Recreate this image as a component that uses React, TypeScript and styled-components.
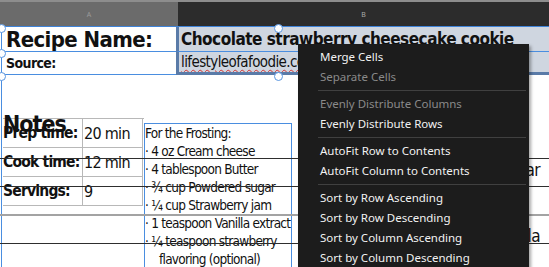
import { Fragment } from 'react';
import styled, { createGlobalStyle } from 'styled-components';

const GlobalStyle = createGlobalStyle`
  html, body {
    margin: 0;
    padding: 0;
    background: #ffffff;
    overflow: hidden;
  }
`;

const DOC_FONT = `"DejaVu Sans Condensed", "DejaVu Sans", sans-serif`;
const UI_FONT = `"Noto Sans", "Open Sans", sans-serif`;

const Page = styled.div`
  position: relative;
  width: 549px;
  height: 267px;
  overflow: hidden;
  background: #ffffff;
  font-family: ${DOC_FONT};
  font-stretch: condensed;
  color: #111;
`;

const ColumnBar = styled.div`
  display: grid;
  grid-template-columns: 178px 1fr;
  height: 27px;
  border-top: 2px solid #8d8d8d;
  box-sizing: border-box;
  border-bottom: 1px solid #3f83d8;
`;

const ColumnHead = styled.div<{ $active?: boolean }>`
  display: flex;
  align-items: center;
  justify-content: center;
  background: ${(p) => (p.$active ? '#2c2c2c' : '#6b6b6b')};
  color: ${(p) => (p.$active ? '#a9a9a9' : '#9a9a9a')};
  font-family: ${UI_FONT};
  font-size: 7px;
`;

const Sheet = styled.div`
  border-left: 1.5px solid #4a8ee0;
  margin-left: 1px;
  height: 240px;
`;

const RecipeGrid = styled.div`
  display: grid;
  grid-template-columns: 174px 1fr;
  grid-template-rows: 25px 23px;
`;

const LabelCell = styled.div<{ $big?: boolean }>`
  display: flex;
  align-items: center;
  padding-left: 4px;
  font-weight: 700;
  font-size: ${(p) => (p.$big ? '22px' : '14px')};
  letter-spacing: ${(p) => (p.$big ? '-0.6px' : '-0.6px')};
  border-bottom: 1px solid #4a8ee0;
  white-space: nowrap;
`;

const ValueCell = styled.div<{ $big?: boolean; $last?: boolean }>`
  display: flex;
  align-items: center;
  padding-left: 2px;
  background: #cfd6e0;
  border-left: 3px solid #5a7ba8;
  border-bottom: ${(p) => (p.$last ? '3px solid #5a7ba8' : '1px solid #4a8ee0')};
  font-weight: ${(p) => (p.$big ? 700 : 400)};
  font-size: ${(p) => (p.$big ? '17px' : '15px')};
  letter-spacing: ${(p) => (p.$big ? '-0.5px' : '-0.6px')};
  white-space: nowrap;
  overflow: hidden;
`;

const Squiggle = styled.span`
  text-decoration: underline wavy #d23030;
  text-decoration-thickness: 1px;
  text-underline-offset: 2px;
`;

const NotesArea = styled.div`
  display: flex;
  margin-top: 36px;
  padding-left: 1px;
`;

const NotesColumn = styled.div`
  width: 141px;
  display: flex;
  flex-direction: column;
`;

const NotesTitle = styled.div`
  font-size: 23px;
  font-weight: 700;
  line-height: 27px;
  height: 7px;
  letter-spacing: -1px;
  position: relative;
  z-index: 1;
`;

const TimesTable = styled.div`
  display: grid;
  grid-template-columns: 80px 60px;
  grid-auto-rows: 29px;
  border-top: 1px solid #b8b8b8;
`;

const TimeLabel = styled.div`
  display: flex;
  align-items: center;
  font-weight: 700;
  font-size: 15.5px;
  letter-spacing: -0.8px;
  white-space: nowrap;
  border-bottom: 1px solid #b8b8b8;
  border-right: 1px solid #b8b8b8;
`;

const TimeValue = styled.div`
  display: flex;
  align-items: center;
  padding-left: 1px;
  font-size: 16px;
  letter-spacing: -0.7px;
  border-bottom: 1px solid #b8b8b8;
  border-right: 1px solid #b8b8b8;
`;

const Ingredients = styled.div`
  margin-top: 12px;
  width: 146px;
  height: 200px;
  border: 1.5px solid #4a8ee0;
  border-bottom: none;
  font-size: 13.5px;
  letter-spacing: -0.75px;
  line-height: 18px;
  padding-top: 0;
`;

const Ingredient = styled.div<{ $indent?: boolean }>`
  padding-left: ${(p) => (p.$indent ? '14px' : '0')};
  white-space: nowrap;
`;

const Rule = styled.div<{ $top: number; $soft?: boolean }>`
  position: absolute;
  left: 0;
  right: 0;
  top: ${(p) => p.$top}px;
  height: ${(p) => (p.$soft ? '2px' : '1px')};
  background: ${(p) => (p.$soft ? '#a3a3a3' : '#2e2e2e')};
  z-index: 2;
`;

const GhostText = styled.div<{ $top: number }>`
  position: absolute;
  right: 9px;
  top: ${(p) => p.$top}px;
  font-size: 17px;
  letter-spacing: -0.6px;
`;

const Handle = styled.div<{ $x: number; $y: number }>`
  position: absolute;
  left: ${(p) => p.$x - 4}px;
  top: ${(p) => p.$y - 4}px;
  width: 7px;
  height: 7px;
  border-radius: 50%;
  background: #fff;
  border: 1px solid #5a96e0;
  z-index: 3;
`;

const Menu = styled.div`
  position: absolute;
  left: 298px;
  top: 44px;
  width: 231px;
  height: 240px;
  padding-top: 3px;
  box-sizing: border-box;
  background: #1c1c1c;
  box-shadow: 2px 2px 3px rgba(0, 0, 0, 0.35);
  font-family: ${UI_FONT};
  font-stretch: normal;
  z-index: 5;
`;

const MenuItem = styled.div<{ $disabled?: boolean }>`
  height: 20px;
  line-height: 20px;
  padding-left: 22px;
  font-size: 11.5px;
  color: ${(p) => (p.$disabled ? '#8a8a8a' : '#f2f2f2')};
  white-space: nowrap;
`;

const MenuSeparator = styled.div`
  height: 1px;
  margin: 3px 3px 3px 20px;
  background: #404040;
`;

const menuGroups: { label: string; disabled?: boolean }[][] = [
  [{ label: 'Merge Cells' }, { label: 'Separate Cells', disabled: true }],
  [{ label: 'Evenly Distribute Columns', disabled: true }, { label: 'Evenly Distribute Rows' }],
  [{ label: 'AutoFit Row to Contents' }, { label: 'AutoFit Column to Contents' }],
  [
    { label: 'Sort by Row Ascending' },
    { label: 'Sort by Row Descending' },
    { label: 'Sort by Column Ascending' },
    { label: 'Sort by Column Descending' },
  ],
];

const times = [
  ['Prep time:', '20 min'],
  ['Cook time:', '12 min'],
  ['Servings:', '9'],
];

const ingredients = [
  'For the Frosting:',
  '· 4 oz Cream cheese',
  '· 4 tablespoon Butter',
  '· ¾ cup Powdered sugar',
  '· ¼ cup Strawberry jam',
  '· 1 teaspoon Vanilla extract',
  '· ¼ teaspoon strawberry',
];

export default function App() {
  return (
    <Page>
      <GlobalStyle />
      <ColumnBar>
        <ColumnHead>A</ColumnHead>
        <ColumnHead $active>B</ColumnHead>
      </ColumnBar>
      <Sheet>
        <RecipeGrid>
          <LabelCell $big>Recipe Name:</LabelCell>
          <ValueCell $big>Chocolate strawberry cheesecake cookie</ValueCell>
          <LabelCell>Source:</LabelCell>
          <ValueCell $last>
            <Squiggle>lifestyleofafoodie.com</Squiggle>
          </ValueCell>
        </RecipeGrid>
        <NotesArea>
          <NotesColumn>
            <NotesTitle>Notes</NotesTitle>
            <TimesTable>
              {times.map(([label, value]) => (
                <Fragment key={label}>
                  <TimeLabel>{label}</TimeLabel>
                  <TimeValue>{value}</TimeValue>
                </Fragment>
              ))}
            </TimesTable>
          </NotesColumn>
          <Ingredients>
            {ingredients.map((item) => (
              <Ingredient key={item}>{item}</Ingredient>
            ))}
            <Ingredient $indent>flavoring (optional)</Ingredient>
          </Ingredients>
        </NotesArea>
      </Sheet>

      <Rule $top={158} />
      <Rule $top={186} />
      <Rule $top={214} $soft />
      <Rule $top={243} />
      <GhostText $top={160}>sugar</GhostText>
      <GhostText $top={226}>vanilla</GhostText>

      <Handle $x={1} $y={28} />
      <Handle $x={1} $y={53} />
      <Handle $x={1} $y={76} />
      <Handle $x={278} $y={28} />
      <Handle $x={278} $y={76} />

      <Menu>
        {menuGroups.map((group, gi) => (
          <div key={gi}>
            {gi > 0 && <MenuSeparator />}
            {group.map((item) => (
              <MenuItem key={item.label} $disabled={item.disabled}>
                {item.label}
              </MenuItem>
            ))}
          </div>
        ))}
      </Menu>
    </Page>
  );
}
